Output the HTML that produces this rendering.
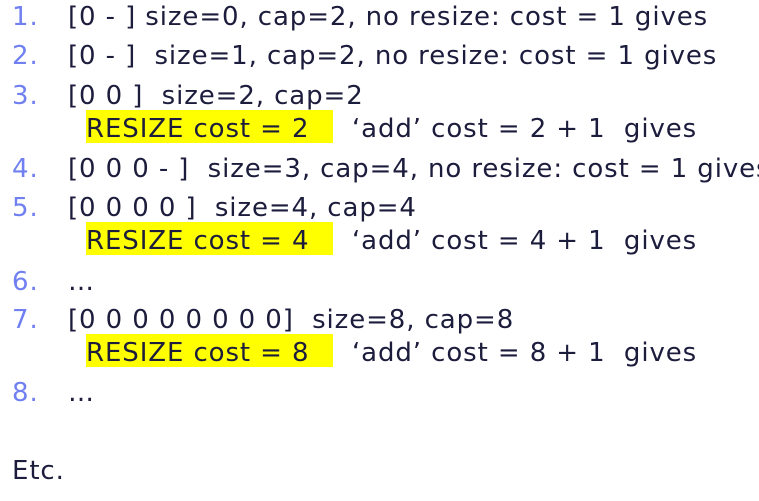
<!DOCTYPE html>
<html><head><style>
body{margin:0;width:759px;height:501px;background:#fff;overflow:hidden;position:relative;font-family:"DejaVu Sans","Liberation Sans",sans-serif;font-size:26px;letter-spacing:0.9px;color:#1c1c3c;}
.l{position:absolute;white-space:pre;line-height:30px;}
.n{position:absolute;left:12px;color:#7080f0;}
.t{position:absolute;left:68px;}
.hl{position:absolute;left:86px;background:#ffff00;width:247px;height:33px;}
</style></head><body>
<div class="l" style="top:2px"><span class="n">1.</span><span class="t">[0 - ] size=0, cap=2, no resize: cost = 1 gives</span></div>
<div class="l" style="top:41px"><span class="n">2.</span><span class="t">[0 - ]  size=1, cap=2, no resize: cost = 1 gives</span></div>
<div class="l" style="top:81px"><span class="n">3.</span><span class="t">[0 0 ]  size=2, cap=2</span></div>
<div class="hl" style="top:110px"></div>
<div class="l" style="top:114px;left:86px">RESIZE cost = 2</div>
<div class="l" style="top:114px;left:352px">‘add’ cost = 2 + 1  gives</div>
<div class="l" style="top:154px"><span class="n">4.</span><span class="t">[0 0 0 - ]  size=3, cap=4, no resize: cost = 1 gives</span></div>
<div class="l" style="top:193px"><span class="n">5.</span><span class="t">[0 0 0 0 ]  size=4, cap=4</span></div>
<div class="hl" style="top:222px"></div>
<div class="l" style="top:226px;left:86px">RESIZE cost = 4</div>
<div class="l" style="top:226px;left:352px">‘add’ cost = 4 + 1  gives</div>
<div class="l" style="top:267px"><span class="n">6.</span><span class="t">…</span></div>
<div class="l" style="top:305px"><span class="n">7.</span><span class="t">[0 0 0 0 0 0 0 0]  size=8, cap=8</span></div>
<div class="hl" style="top:334px"></div>
<div class="l" style="top:338px;left:86px">RESIZE cost = 8</div>
<div class="l" style="top:338px;left:352px">‘add’ cost = 8 + 1  gives</div>
<div class="l" style="top:378px"><span class="n">8.</span><span class="t">…</span></div>
<div class="l" style="top:456px;left:12px">Etc.</div>
</body></html>
